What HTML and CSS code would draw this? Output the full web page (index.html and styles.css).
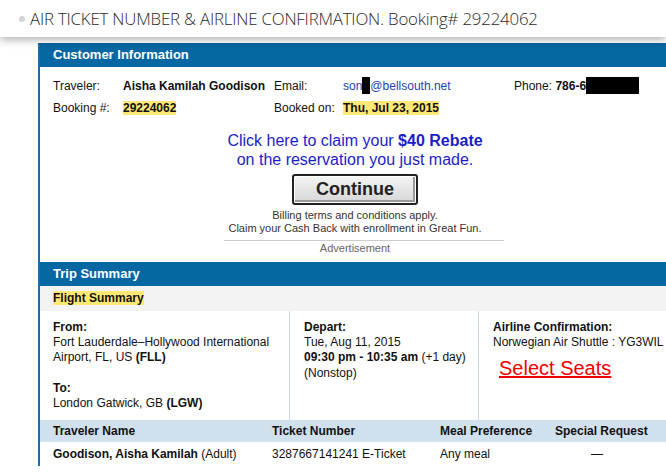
FILE: index.html
```html
<!DOCTYPE html>
<html>
<head>
<meta charset="utf-8">
<link rel="stylesheet" href="styles.css">
</head>
<body>
<div class="titlebar"><span class="dot"></span><span class="title">AIR TICKET NUMBER &amp; AIRLINE CONFIRMATION. Booking# 29224062</span></div>
<div class="page">
  <div class="frame">
    <div class="sec-head">Customer Information</div>
    <div class="cust">
      <span>Traveler:</span><b>Aisha Kamilah Goodison</b><span>Email:</span><span class="email">son<span class="redact r1"></span>@bellsouth.net</span><span>Phone: <b>786-6</b><span class="redact r2"></span></span>
      <span>Booking #:</span><span><b class="hl">29224062</b></span><span>Booked on:</span><span><b class="hl">Thu, Jul 23, 2015</b></span><span></span>
    </div>
    <div class="ad">
      <div class="ad-claim">Click here to claim your <b>$40 Rebate</b><br>on the reservation you just made.</div>
      <div class="btn">Continue</div>
      <div class="ad-small">Billing terms and conditions apply.<br>Claim your Cash Back with enrollment in Great Fun.</div>
      <div class="ad-label">Advertisement</div>
    </div>
    <div class="sec-head">Trip Summary</div>
    <div class="sub-head"><b class="hl">Flight Summary</b></div>
    <div class="flight">
      <div class="col c1">
        <b>From:</b><br>Fort Lauderdale–Hollywood International<br>Airport, FL, US <b>(FLL)</b><br><br><b>To:</b><br>London Gatwick, GB <b>(LGW)</b>
      </div>
      <div class="col c2">
        <b>Depart:</b><br>Tue, Aug 11, 2015<br><b>09:30 pm - 10:35 am</b> (+1 day)<br>(Nonstop)
      </div>
      <div class="col c3">
        <b>Airline Confirmation:</b><br>Norwegian Air Shuttle : YG3WIL
        <a class="seats">Select Seats</a>
      </div>
    </div>
    <div class="trow thead">
      <span>Traveler Name</span><span>Ticket Number</span><span>Meal Preference</span><span>Special Request</span>
    </div>
    <div class="trow">
      <span><b>Goodison, Aisha Kamilah</b> (Adult)</span><span>3287667141241 E-Ticket</span><span>Any meal</span><span class="center">—</span>
    </div>
  </div>
</div>
</body>
</html>
```
FILE: styles.css
```css
html, body { margin: 0; padding: 0; }
body {
  width: 666px; height: 474px; overflow: hidden; background: #fff;
  font-family: "Liberation Sans", Arial, sans-serif; font-size: 12px; color: #111;
}
.titlebar {
  position: relative; z-index: 2;
  height: 37px; background: #fff;
  display: flex; align-items: center;
  box-shadow: 0 2px 9px rgba(0,0,0,0.35);
}
.dot {
  width: 6px; height: 6px; border-radius: 50%; background: #d4d4d4;
  margin-left: 19px; margin-right: 5px; margin-top: 1px;
}
.title {
  font-family: "Open Sans", sans-serif; font-weight: 300; font-size: 16.85px;
  color: #2a2a2a; letter-spacing: -0.2px;
}
.page { padding-top: 6px; }
.frame {
  margin-left: 38px; width: 650px;
  border-left: 2px solid #1c6aa6;
}
.sec-head {
  height: 24px; line-height: 24px; background: #0767a2; color: #fff;
  font-weight: bold; font-size: 13px; padding-left: 13px;
}
.cust {
  display: grid; grid-template-columns: 70px 151px 69px 171px auto;
  padding: 11px 0 0 13px; row-gap: 6px; line-height: 16px;
}
.email { color: #1e3fb0; }
.redact { display: inline-block; background: #000; vertical-align: middle; }
.r1 { width: 8px; height: 17px; margin-top: -3px; }
.r2 { width: 53px; height: 17px; margin-top: -3px; }
.hl { background: #ffe873; }
.ad { text-align: center; padding-top: 15px; padding-right: 20px; }
.ad-claim { color: #1d1dc8; font-size: 16px; line-height: 19px; }
.btn {
  display: inline-block; width: 122px; height: 27px; margin-top: 5px;
  border: 2px solid #222; border-radius: 3px;
  background: linear-gradient(#f4f4f4, #d6d6d6);
  box-shadow: inset 0 0 0 1px #fff, inset -1px -1px 0 2px #999;
  font-weight: bold; font-size: 18px; line-height: 27px; color: #222;
}
.ad-small { font-size: 11px; line-height: 13px; color: #333; margin-top: 4px; }
.ad-label {
  width: 262px; margin: 5px 0 0 184px; border-top: 1px solid #ccc;
  font-size: 11px; color: #666; padding: 1px 18px 7px 0; line-height: 13px;
}
.sub-head {
  height: 25px; line-height: 25px; background: #f3f3f3; padding-left: 13px;
}
.flight { display: flex; height: 109px; }
.col { padding-top: 9px; line-height: 15.2px; }
.c1 { width: 236px; padding-left: 13px; }
.c2 { width: 174px; padding-left: 14px; border-left: 1px solid #c8d8e8; }
.c3 { flex: 1; padding-left: 14px; border-left: 1px solid #c8d8e8; }
.seats {
  display: block; color: #f20000; text-decoration: underline; font-size: 20px;
  line-height: 22px; margin-left: 6px; margin-top: 7px;
}
.trow {
  display: grid; grid-template-columns: 219px 168px 115px 120px;
  padding-left: 13px; height: 22px; line-height: 22px;
}
.thead { background: #d1e0ed; font-weight: bold; }
.trow + .trow { height: 24px; line-height: 24px; }
.center { text-align: center; padding-right: 36px; }
```
